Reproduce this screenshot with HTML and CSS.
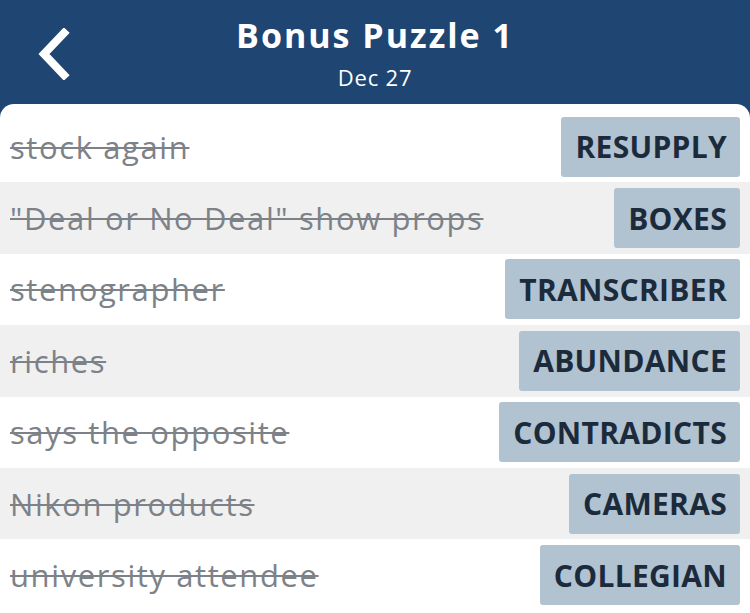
FILE: index.html
```html
<!DOCTYPE html>
<html>
<head>
<meta charset="utf-8">
<link rel="stylesheet" href="styles.css">
</head>
<body>
<header class="header">
  <svg class="back" width="36" height="52" viewBox="0 0 36 52"><path d="M29 5 L9 26 L29 47" fill="none" stroke="#fff" stroke-width="8" stroke-linecap="square"/></svg>
  <div class="title">Bonus Puzzle 1</div>
  <div class="date">Dec 27</div>
</header>
<main class="card">
  <div class="row"><span class="clue">stock again</span><span class="answer">RESUPPLY</span></div>
  <div class="row alt"><span class="clue">"Deal or No Deal" show props</span><span class="answer">BOXES</span></div>
  <div class="row"><span class="clue">stenographer</span><span class="answer">TRANSCRIBER</span></div>
  <div class="row alt"><span class="clue">riches</span><span class="answer">ABUNDANCE</span></div>
  <div class="row"><span class="clue">says the opposite</span><span class="answer">CONTRADICTS</span></div>
  <div class="row alt"><span class="clue">Nikon products</span><span class="answer">CAMERAS</span></div>
  <div class="row"><span class="clue">university attendee</span><span class="answer">COLLEGIAN</span></div>
</main>
</body>
</html>
```
FILE: styles.css
```css
* { box-sizing: border-box; }
html, body { margin: 0; padding: 0; }
body {
  background: #1f4572;
  font-family: "Open Sans", "Noto Sans", sans-serif;
  width: 750px;
  height: 613px;
  overflow: hidden;
}
.header {
  position: relative;
  height: 104px;
  display: flex;
  flex-direction: column;
  align-items: center;
  color: #fff;
  padding-top: 12px;
}
.back {
  position: absolute;
  left: 35px;
  top: 28px;
}
.title {
  font-size: 34px;
  font-weight: 700;
  line-height: 46px;
  letter-spacing: 2px;
}
.date {
  font-size: 22px;
  line-height: 30px;
  margin-top: 4px;
  letter-spacing: 0.8px;
}
.card {
  background: #fff;
  border-radius: 14px 14px 0 0;
  padding-top: 7px;
  height: 509px;
}
.row {
  height: 71.4px;
  display: flex;
  align-items: center;
  justify-content: space-between;
  padding: 0 10px;
}
.row.alt { background: #f0f0f0; }
.clue {
  color: #7d8288;
  font-size: 31px;
  letter-spacing: 1.6px;
  text-decoration: line-through;
  text-decoration-thickness: 2px;
  white-space: nowrap;
}
.answer {
  background: #b1c2d0;
  color: #1c2b3b;
  font-weight: 700;
  font-size: 30px;
  letter-spacing: 0.3px;
  height: 60px;
  display: flex;
  align-items: center;
  padding: 0 13px 0 14px;
  border-radius: 3px;
}
```
